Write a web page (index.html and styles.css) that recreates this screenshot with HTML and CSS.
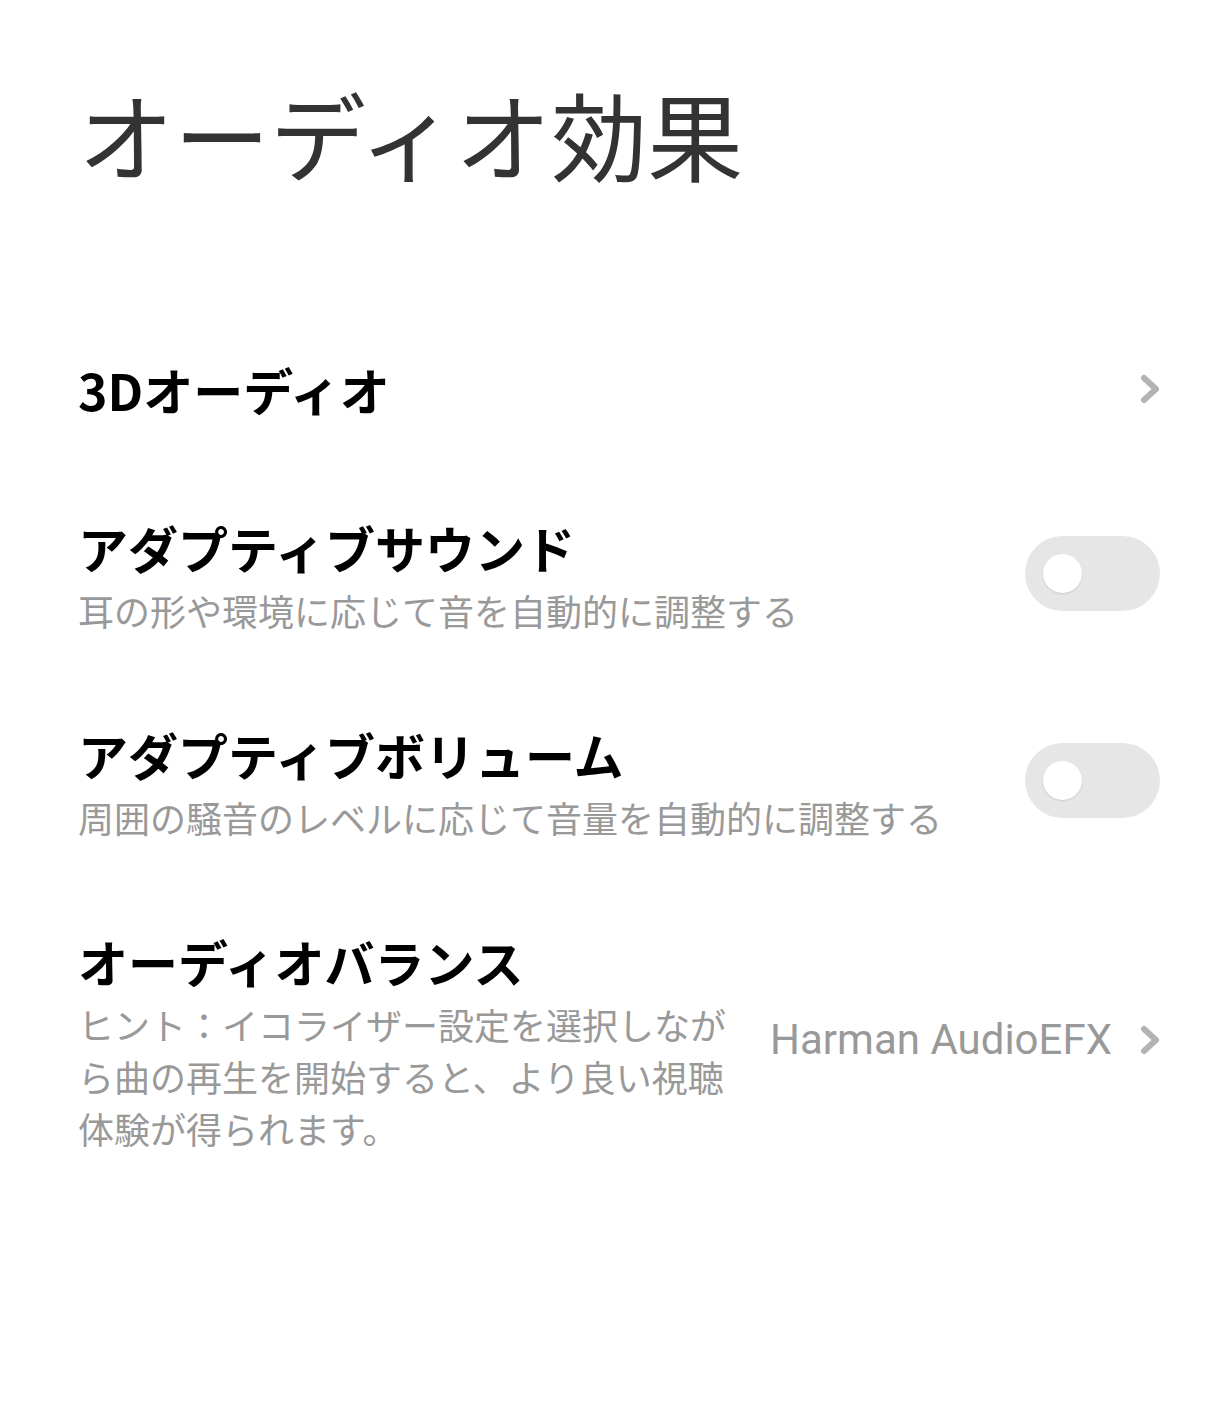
FILE: index.html
```html
<!DOCTYPE html>
<html lang="ja">
<head>
    <meta charset="UTF-8">
    <meta name="viewport" content="width=device-width, initial-scale=1.0">
    <title>オーディオ効果</title>
    <link rel="stylesheet" href="styles.css">
</head>
<body>
    <div class="page">
        <h1 class="page-title">オーディオ効果</h1>

        <div class="settings">
            <div class="row row-single">
                <div class="row-text">
                    <div class="row-title">3Dオーディオ</div>
                </div>
                <svg class="chevron" viewBox="0 0 20 30" width="20" height="30">
                    <polyline points="4,4 16,15 4,26" />
                </svg>
            </div>

            <div class="row">
                <div class="row-text">
                    <div class="row-title">アダプティブサウンド</div>
                    <div class="row-sub">耳の形や環境に応じて音を自動的に調整する</div>
                </div>
                <div class="toggle"><span class="knob"></span></div>
            </div>

            <div class="row">
                <div class="row-text">
                    <div class="row-title">アダプティブボリューム</div>
                    <div class="row-sub">周囲の騒音のレベルに応じて音量を自動的に調整する</div>
                </div>
                <div class="toggle"><span class="knob"></span></div>
            </div>

            <div class="row">
                <div class="row-text narrow">
                    <div class="row-title">オーディオバランス</div>
                    <div class="row-sub">ヒント：イコライザー設定を選択しながら曲の再生を開始すると、より良い視聴体験が得られます。</div>
                </div>
                <div class="row-value">
                    <span class="value">Harman AudioEFX</span>
                    <svg class="chevron" viewBox="0 0 20 30" width="20" height="30">
                        <polyline points="4,4 16,15 4,26" />
                    </svg>
                </div>
            </div>
        </div>
    </div>
</body>
</html>
```

FILE: styles.css
```css
body {
    margin: 0;
    padding: 0;
    background-color: #fff;
    font-family: 'Noto Sans CJK JP', 'Noto Sans', sans-serif;
}

.page {
    padding: 0 60px 0 78px;
}

.page-title {
    margin: 77px 0 0 0;
    font-size: 96px;
    font-weight: 400;
    line-height: 112px;
    color: #333;
}

.settings {
    margin-top: 121px;
}

.row {
    display: flex;
    align-items: center;
    justify-content: space-between;
    padding: 44px 0;
}

.row-single {
    padding: 49px 0 54px;
}

.row-text {
    flex: 1;
    min-width: 0;
}

.row-text.narrow {
    flex: 0 0 652px;
}

.row-title {
    font-size: 50px;
    font-weight: 700;
    line-height: 60px;
    color: #000;
}

.row-sub {
    margin-top: 7px;
    font-size: 36px;
    line-height: 52px;
    color: #999;
}

.row-value {
    display: flex;
    align-items: center;
    gap: 28px;
    margin-bottom: 6px;
}

.value {
    font-family: 'Roboto', sans-serif;
    font-size: 42px;
    color: #999;
}

.chevron {
    display: block;
    flex-shrink: 0;
}

.chevron polyline {
    fill: none;
    stroke: #b3b3b3;
    stroke-width: 6;
    stroke-linecap: round;
    stroke-linejoin: round;
}

.toggle {
    position: relative;
    width: 135px;
    height: 75px;
    border-radius: 38px;
    background-color: #e6e6e6;
    flex-shrink: 0;
    margin-bottom: 7px;
}

.knob {
    position: absolute;
    left: 18px;
    top: 18px;
    width: 39px;
    height: 39px;
    border-radius: 50%;
    background-color: #fff;
    box-shadow: 0 1px 2px rgba(0, 0, 0, 0.12);
}
```
